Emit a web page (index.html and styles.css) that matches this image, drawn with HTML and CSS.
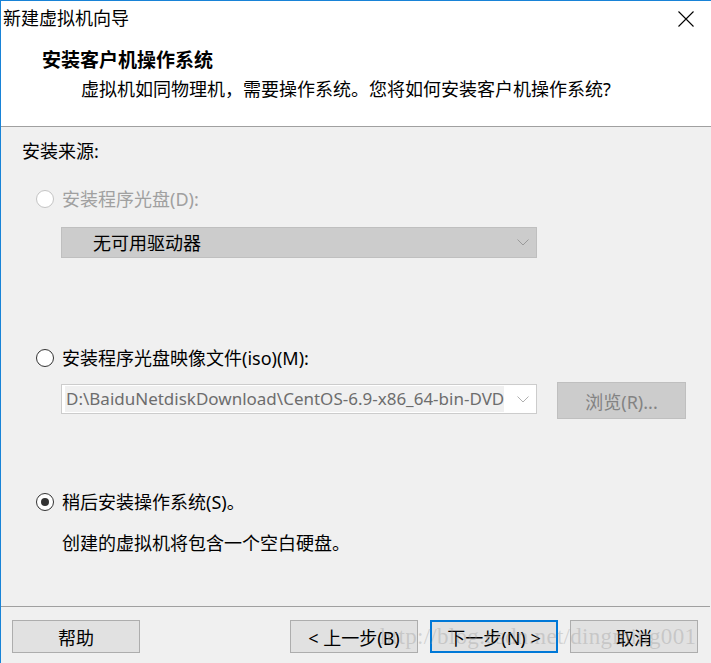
FILE: index.html
```html
<!DOCTYPE html>
<html lang="zh-CN">
<head>
<meta charset="utf-8">
<title>新建虚拟机向导</title>
<link rel="stylesheet" href="styles.css">
</head>
<body>
<div class="window">
  <div class="titlebar">
    <span class="title">新建虚拟机向导</span>
    <svg class="close" width="16" height="16" viewBox="0 0 16 16"><path d="M0.5 0.5 L15.5 15.5 M15.5 0.5 L0.5 15.5" stroke="#000" stroke-width="1.1" fill="none"/></svg>
  </div>
  <div class="header">
    <div class="h-title">安装客户机操作系统</div>
    <div class="h-sub">虚拟机如同物理机，需要操作系统。您将如何安装客户机操作系统?</div>
  </div>
  <div class="sep"></div>
  <div class="content">
    <div class="group-label">安装来源:</div>
    <div class="radio-row disabled r1">
      <span class="radio"></span><span class="rlabel">安装程序光盘(D):</span>
    </div>
    <div class="select disabled-select">
      <span class="select-text">无可用驱动器</span>
      <svg class="chev" width="12" height="7" viewBox="0 0 12 7"><path d="M0.5 0.5 L6 6 L11.5 0.5" stroke="#9a9a9a" stroke-width="1" fill="none"/></svg>
    </div>
    <div class="radio-row r2">
      <span class="radio"></span><span class="rlabel">安装程序光盘映像文件(iso)(M):</span>
    </div>
    <div class="iso-row">
      <div class="combo">
        <span class="combo-text">D:\BaiduNetdiskDownload\CentOS-6.9-x86_64-bin-DVD</span>
        <svg class="chev" width="12" height="7" viewBox="0 0 12 7"><path d="M0.5 0.5 L6 6 L11.5 0.5" stroke="#b0b0b0" stroke-width="1" fill="none"/></svg>
      </div>
      <div class="browse">浏览(R)...</div>
    </div>
    <div class="radio-row r3">
      <span class="radio checked"></span><span class="rlabel">稍后安装操作系统(S)。</span>
    </div>
    <div class="note">创建的虚拟机将包含一个空白硬盘。</div>
  </div>
  <div class="footer">
    <div class="btn">帮助</div>
    <div class="spacer"></div>
    <div class="btn">&lt; 上一步(B)</div>
    <div class="btn primary">下一步(N) &gt;</div>
    <div class="btn">取消</div>
    <div class="watermark">http://blog.csdn.net/dingming001</div>
  </div>
</div>
</body>
</html>
```
FILE: styles.css
```css
html, body {
  margin: 0;
  padding: 0;
}
body {
  width: 711px;
  height: 663px;
  overflow: hidden;
  background: #f0f0f0;
  font-family: "Noto Sans", "Noto Sans CJK SC", sans-serif;
  font-size: 18px;
  color: #000;
}
.window {
  box-sizing: border-box;
  width: 711px;
  height: 663px;
  border-top: 1px solid #1883d7;
  border-left: 1px solid #1883d7;
  display: flex;
  flex-direction: column;
}
.titlebar {
  background: #fff;
  height: 35px;
  display: flex;
  align-items: center;
  justify-content: space-between;
  padding-left: 2px;
  padding-right: 17px;
}
.title {
  line-height: 35px;
}
.close {
  display: block;
  margin-top: 1px;
}
.header {
  background: #fff;
  padding: 12px 0 25px 41px;
}
.h-title {
  font-weight: bold;
  line-height: 24px;
  font-size: 19px;
}
.h-sub {
  margin-top: 5px;
  padding-left: 39px;
  line-height: 24px;
}
.sep {
  height: 1px;
  background: #a0a0a0;
}
.content {
  flex: 1;
  padding-left: 21px;
  padding-top: 12px;
  display: flex;
  flex-direction: column;
  align-items: flex-start;
}
.group-label {
  line-height: 24px;
}
.radio-row {
  display: flex;
  align-items: center;
  height: 24px;
  padding-left: 14px;
}
.r1 { margin-top: 24px; }
.r2 { margin-top: 88px; }
.r3 { margin-top: 71px; }
.radio {
  box-sizing: border-box;
  flex: none;
  width: 18px;
  height: 18px;
  border-radius: 50%;
  border: 1px solid #333;
  background: #fff;
  margin-right: 8px;
  display: flex;
  align-items: center;
  justify-content: center;
}
.disabled .radio {
  border-color: #c4c4c4;
}
.disabled .rlabel {
  color: #a0a0a0;
}
.radio.checked::after {
  content: "";
  width: 8px;
  height: 8px;
  border-radius: 50%;
  background: #333;
}
.rlabel {
  line-height: 24px;
}
.select {
  box-sizing: border-box;
  margin-top: 16px;
  margin-left: 39px;
  width: 476px;
  height: 31px;
  background: #cccccc;
  border: 1px solid #bfbfbf;
  display: flex;
  align-items: center;
  justify-content: space-between;
  padding-left: 31px;
  padding-right: 7px;
}
.select-text {
  line-height: 24px;
}
.iso-row {
  display: flex;
  align-items: flex-start;
  margin-top: 12px;
  margin-left: 39px;
}
.combo {
  box-sizing: border-box;
  flex: none;
  margin-top: 2px;
  width: 476px;
  height: 30px;
  background: #fff;
  border: 1px solid #cccccc;
  display: flex;
  align-items: center;
  justify-content: space-between;
  padding-left: 3px;
  padding-right: 7px;
}
.combo-text {
  color: #6d6d6d;
  background: #f0f0f0;
  line-height: 26px;
  padding-left: 1px;
  white-space: nowrap;
  font-size: 17px;
}
.chev {
  display: block;
  flex: none;
}
.browse {
  box-sizing: border-box;
  flex: none;
  margin-left: 20px;
  width: 129px;
  height: 37px;
  background: #cccccc;
  border: 1px solid #bfbfbf;
  color: #838383;
  display: flex;
  align-items: center;
  justify-content: center;
}
.note {
  margin-top: 17px;
  padding-left: 40px;
  line-height: 24px;
}
.footer {
  position: relative;
  height: 57px;
  box-sizing: border-box;
  margin-right: 1px;
  border-top: 1px solid #a0a0a0;
  display: flex;
  align-items: flex-start;
  padding-top: 13px;
  padding-left: 11px;
}
.spacer {
  flex: none;
  width: 138px;
}
.btn {
  box-sizing: border-box;
  flex: none;
  width: 128px;
  height: 33px;
  background: #e1e1e1;
  border: 1px solid #adadad;
  display: flex;
  align-items: center;
  justify-content: center;
  margin-right: 12px;
}
.btn.primary {
  border: 2px solid #0078d7;
}
.watermark {
  position: absolute;
  left: 379px;
  top: 17px;
  font-family: "Liberation Serif", serif;
  font-size: 23px;
  color: rgba(150, 150, 150, 0.35);
  white-space: nowrap;
  letter-spacing: 0.3px;
  pointer-events: none;
}
```
